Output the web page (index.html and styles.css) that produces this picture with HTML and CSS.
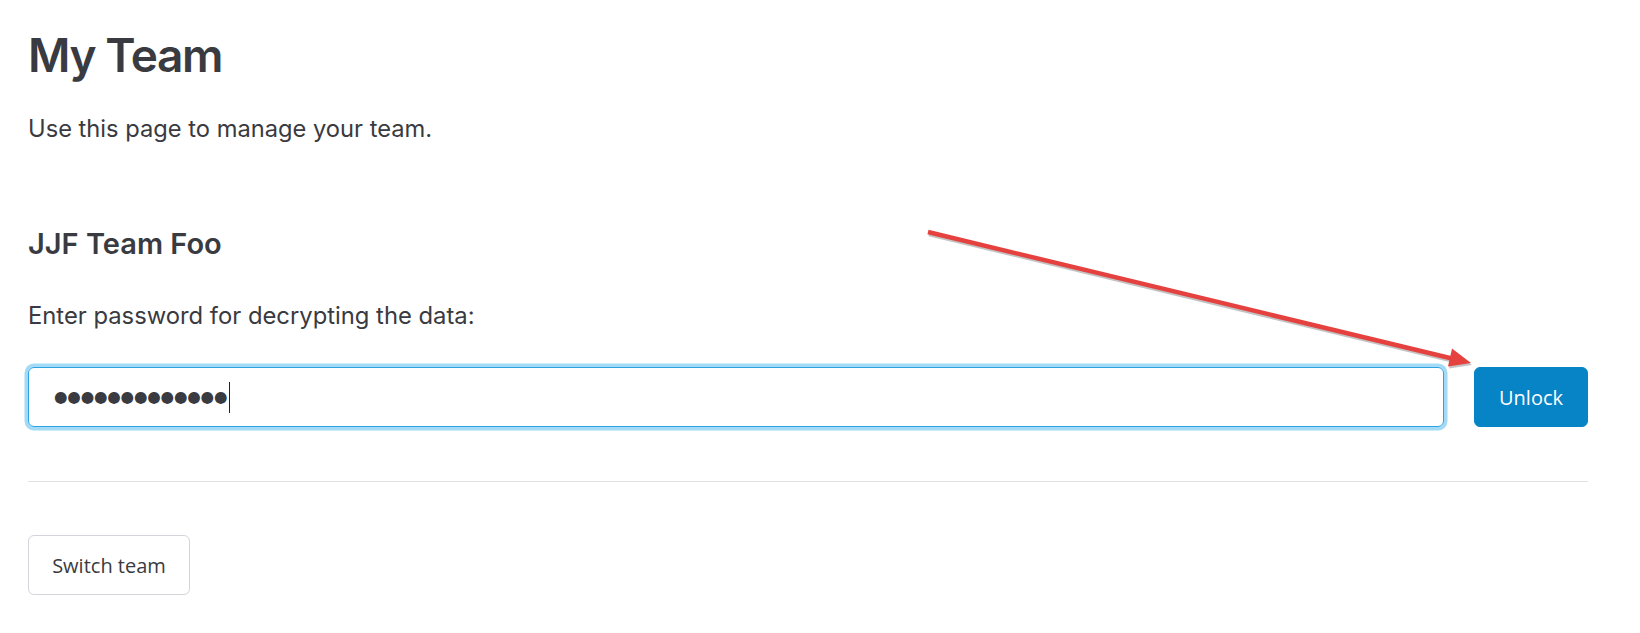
FILE: index.html
```html
<!DOCTYPE html>
<html lang="en">
<head>
<meta charset="utf-8">
<title>My Team</title>
<link rel="stylesheet" href="styles.css">
</head>
<body>
<main class="page">
  <h1 class="title">My Team</h1>
  <p class="lead">Use this page to manage your team.</p>
  <h4 class="team-name">JJF Team Foo</h4>
  <p class="label">Enter password for decrypting the data:</p>
  <div class="unlock-row">
    <div class="pw-field"><span class="dots">●●●●●●●●●●●●●</span><span class="caret"></span></div>
    <button class="btn btn-primary" type="button">Unlock</button>
  </div>
  <hr class="divider">
  <button class="btn btn-outline" type="button">Switch team</button>
</main>
<svg class="annotation" width="1640" height="633" viewBox="0 0 1640 633" aria-hidden="true">
  <g transform="translate(1,2)" opacity="0.35">
    <line x1="928" y1="232" x2="1454" y2="359" stroke="#555" stroke-width="4.5"/>
    <polygon points="1471,363 1452,348.5 1448,366.5" fill="#555"/>
  </g>
  <line x1="928" y1="232" x2="1454" y2="359" stroke="#e5413f" stroke-width="4.5"/>
  <polygon points="1471,363 1452,348.5 1448,366.5" fill="#e5413f"/>
</svg>
</body>
</html>
```
FILE: styles.css
```css
html, body {
  margin: 0;
  padding: 0;
  background: #ffffff;
}

body {
  font-family: Inter, "Noto Sans", sans-serif;
  color: #3a3a41;
  position: relative;
}

.page {
  display: flex;
  flex-direction: column;
  align-items: flex-start;
  width: 1560px;
  padding: 25px 0 0 28px;
}

.title {
  margin: 0;
  font-size: 46px;
  line-height: 60px;
  font-weight: 600;
  letter-spacing: -0.03em;
}

.lead {
  margin: 26px 0 0;
  font-size: 23.7px;
  line-height: 36px;
}

.team-name {
  margin: 79px 0 0;
  font-size: 29px;
  line-height: 36px;
  font-weight: 600;
}

.label {
  margin: 36px 0 0;
  font-size: 23.8px;
  line-height: 36px;
}

.unlock-row {
  margin-top: 33px;
  display: flex;
  gap: 30px;
  width: 100%;
  align-items: stretch;
}

.pw-field {
  flex: 1;
  height: 60px;
  box-sizing: border-box;
  border: 1px solid #2fa2e4;
  border-radius: 6px;
  box-shadow: 0 0 0 3.5px #a3dbf6;
  display: flex;
  align-items: center;
  padding-left: 25px;
}

.dots {
  font-family: "DejaVu Sans", sans-serif;
  font-size: 15.5px;
  letter-spacing: -0.2px;
  color: #3a3a41;
}

.caret {
  width: 1px;
  height: 31px;
  background: #222;
  margin-left: 2px;
}

.btn {
  font-family: "Open Sans", "Noto Sans", sans-serif;
  font-size: 20px;
  border-radius: 6px;
  cursor: pointer;
  box-sizing: border-box;
}

.btn-primary {
  width: 114px;
  height: 60px;
  background: #0784c6;
  border: 1px solid #0784c6;
  color: #ffffff;
  padding: 0;
}

.btn-outline {
  margin-top: 53px;
  width: 162px;
  height: 60px;
  background: #ffffff;
  border: 1px solid #d4d4da;
  color: #3a3a41;
  padding: 0;
}

.divider {
  margin: 54px 0 0;
  width: 100%;
  border: 0;
  border-top: 1px solid #e2e2e2;
}

.annotation {
  position: absolute;
  left: 0;
  top: 0;
  pointer-events: none;
}
```
